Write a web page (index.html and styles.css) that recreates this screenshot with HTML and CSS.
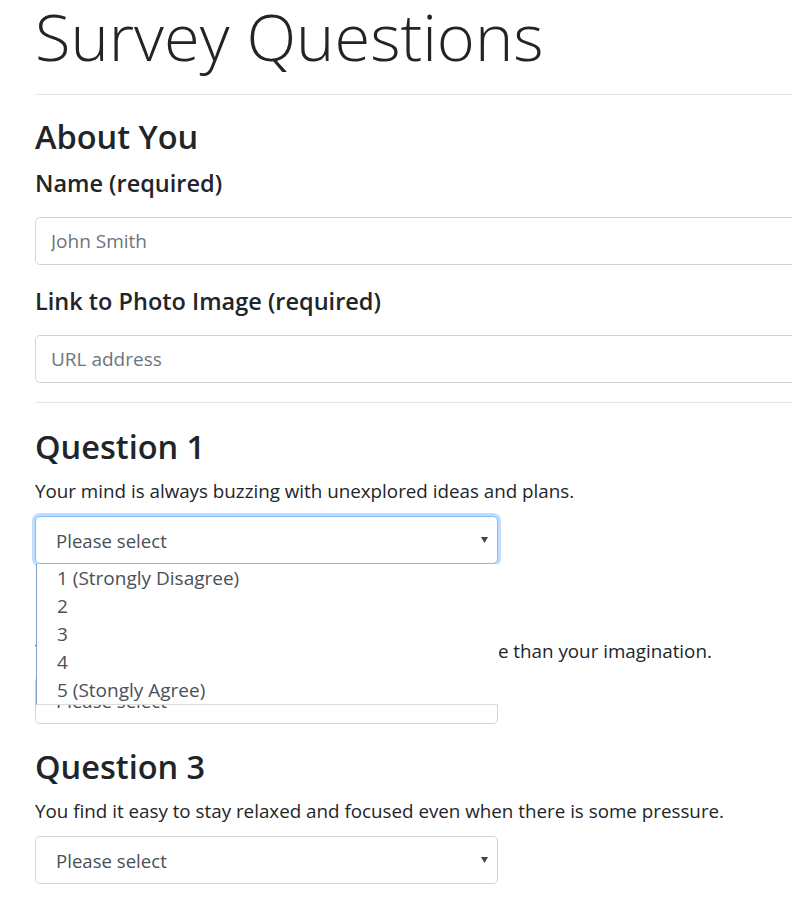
FILE: index.html
```html
<!DOCTYPE html>
<html lang="en">
<head>
<meta charset="utf-8">
<title>Survey Questions</title>
<link rel="stylesheet" href="styles.css">
</head>
<body>
<div class="page">
  <h1 class="title">Survey Questions</h1>
  <hr class="rule rule-top">
  <section class="about">
    <h2 class="section-title">About You</h2>
    <label class="field-label" for="name">Name (required)</label>
    <input class="text-input" id="name" type="text" placeholder="John Smith">
    <label class="field-label field-label-next" for="photo">Link to Photo Image (required)</label>
    <input class="text-input" id="photo" type="text" placeholder="URL address">
  </section>
  <hr class="rule rule-bottom">

  <section class="question">
    <h2 class="section-title">Question 1</h2>
    <p class="question-text">Your mind is always buzzing with unexplored ideas and plans.</p>
    <div class="select-wrap">
      <div class="select is-open"><span>Please select</span><svg class="caret" width="7" height="6" viewBox="0 0 7 6"><polygon points="0,0 7,0 3.5,6"/></svg></div>
      <ul class="options">
        <li class="option">1 (Strongly Disagree)</li>
        <li class="option">2</li>
        <li class="option">3</li>
        <li class="option">4</li>
        <li class="option">5 (Stongly Agree)</li>
      </ul>
    </div>
  </section>

  <section class="question">
    <h2 class="section-title">Question 2</h2>
    <p class="question-text">You are more inclined to rely on your prior experience than your imagination.</p>
    <div class="select-wrap">
      <div class="select"><span>Please select</span><svg class="caret" width="7" height="6" viewBox="0 0 7 6"><polygon points="0,0 7,0 3.5,6"/></svg></div>
    </div>
  </section>

  <section class="question">
    <h2 class="section-title">Question 3</h2>
    <p class="question-text">You find it easy to stay relaxed and focused even when there is some pressure.</p>
    <div class="select-wrap">
      <div class="select"><span>Please select</span><svg class="caret" width="7" height="6" viewBox="0 0 7 6"><polygon points="0,0 7,0 3.5,6"/></svg></div>
    </div>
  </section>
</div>
</body>
</html>
```
FILE: styles.css
```css
html, body {
  margin: 0;
  overflow: hidden;
  background: #fff;
}

body {
  font-family: "Open Sans", "Noto Sans", sans-serif;
  color: #212529;
}

.page {
  width: 1100px;
  padding: 4px 0 0 35px;
}

.title {
  margin: 0;
  font-size: 65px;
  line-height: 65px;
  font-weight: 300;
}

.rule {
  height: 0;
  margin: 0;
  border: 0;
  border-top: 1px solid rgba(0, 0, 0, 0.1);
}

.rule-top {
  margin-top: 25px;
}

.rule-bottom {
  margin-top: 19px;
}

.section-title {
  margin: 0;
  font-size: 32.5px;
  line-height: 39px;
  font-weight: 600;
}

.about .section-title {
  margin-top: 22px;
}

.field-label {
  display: block;
  margin-top: 13px;
  font-size: 23.5px;
  line-height: 28px;
  font-weight: 600;
}

.field-label-next {
  margin-top: 22px;
}

.text-input {
  display: block;
  width: 100%;
  height: 48px;
  box-sizing: border-box;
  margin: 20px 0 0;
  padding: 0 15px;
  border: 1px solid #ced4da;
  border-radius: 5px;
  font-family: "Open Sans", "Noto Sans", sans-serif;
  font-size: 19px;
  color: #495057;
  background: #fff;
  outline: none;
}

.text-input::placeholder {
  color: #6c757d;
  opacity: 1;
}

.question {
  margin-top: 24px;
}

.question + .question {
  margin-top: 23px;
}

.question-text {
  margin: 11px 0 0;
  font-size: 18.8px;
  line-height: 28px;
}

.select-wrap {
  position: relative;
  width: 463px;
  margin-top: 11px;
}

.select {
  display: flex;
  align-items: center;
  justify-content: space-between;
  height: 48px;
  box-sizing: border-box;
  padding: 0 9px 0 20px;
  border: 1px solid #ced4da;
  border-radius: 5px;
  font-size: 18.6px;
  color: #495057;
  background: #fff;
}

.select.is-open {
  border-color: #80bdff;
  box-shadow: 0 0 0 3px rgba(0, 123, 255, 0.25);
}

.caret {
  display: block;
  flex: none;
  fill: #444;
}

.options {
  position: absolute;
  top: 100%;
  left: 1px;
  z-index: 10;
  width: 462px;
  box-sizing: border-box;
  margin: 0;
  padding: 0;
  list-style: none;
  background: #fff;
  border-left: 1px solid #7f9fcf;
  border-bottom: 1px solid #dcdcdc;
}

.option {
  height: 28px;
  padding-left: 20px;
  font-size: 19px;
  line-height: 28px;
  color: #495057;
}
```
